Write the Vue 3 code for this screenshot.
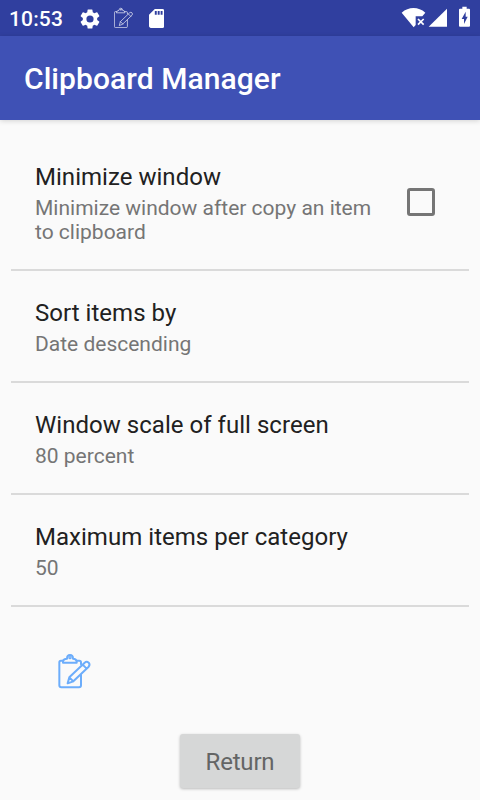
<script setup>
const settings = [
  { title: 'Minimize window', summary: 'Minimize window after copy an item to clipboard', checkbox: true },
  { title: 'Sort items by', summary: 'Date descending' },
  { title: 'Window scale of full screen', summary: '80 percent' },
  { title: 'Maximum items per category', summary: '50' }
]
</script>

<template>
  <div class="screen">
    <svg class="defs" width="0" height="0">
      <symbol id="clipboard" viewBox="51 37 108 114">
        <path d="M69 60H63Q58 60 58 65V134Q58 140 64 140H117Q123 140 123 134V103M110 60H118Q123 60 123 65V71" />
        <path d="M69 66H110V62Q109 54 99 54Q99 43 90 43Q81 43 81 54Q70 54 69 62Z" />
        <circle cx="90" cy="51" r="2" />
        <path d="M83 128L88 110L134 66Q140 61 146 66Q151 72 146 78L100 122ZM88 110L100 122M128 72L140 84" />
      </symbol>
    </svg>
    <header class="status">
      <span class="time">10:53</span>
      <svg class="gear" viewBox="0 0 24 24"><path fill="#fff" d="M19.14 12.94c.04-.3.06-.61.06-.94s-.02-.64-.07-.94l2.03-1.58a.49.49 0 0 0 .12-.61l-1.92-3.32a.49.49 0 0 0-.59-.22l-2.39.96c-.5-.38-1.03-.7-1.62-.94l-.36-2.54a.48.48 0 0 0-.48-.41h-3.84a.48.48 0 0 0-.47.41l-.36 2.54c-.59.24-1.13.57-1.62.94l-2.39-.96a.48.48 0 0 0-.59.22L2.74 8.87a.48.48 0 0 0 .12.61l2.03 1.58c-.05.3-.09.63-.09.94s.02.64.07.94l-2.03 1.58a.49.49 0 0 0-.12.61l1.92 3.32c.12.22.37.29.59.22l2.39-.96c.5.38 1.03.7 1.62.94l.36 2.54c.05.24.24.41.48.41h3.84c.24 0 .44-.17.47-.41l.36-2.54c.59-.24 1.13-.56 1.62-.94l2.39.96c.22.08.47 0 .59-.22l1.92-3.32a.48.48 0 0 0-.12-.61l-2.01-1.58zM12 15.6A3.6 3.6 0 1 1 12 8.4a3.6 3.6 0 0 1 0 7.2z" /></svg>
      <svg class="clip small"><use href="#clipboard" /></svg>
      <svg class="sd" viewBox="4 2 16 20" preserveAspectRatio="none"><path fill="#fff" d="M18 2h-8L4 8v12c0 1.1.9 2 2 2h12c1.1 0 2-.9 2-2V4c0-1.1-.9-2-2-2zm-6 6h-2V4h2v4zm3 0h-2V4h2v4zm3 0h-2V4h2v4z" /></svg>
      <svg class="indicators" viewBox="30 0 240 108">
        <path fill="#fff" d="M35 38Q51 24 70.500 24Q90 24 106 38L97 49H77V75L71 82Z" />
        <path fill="none" stroke="#fff" stroke-width="5" d="M84 57L101 74M101 57L84 74" />
        <path fill="#fff" d="M116 80L171 26V80Z" />
        <path fill="#fff" fill-rule="evenodd" d="M217 20H230V26H237Q240 26 240 29V77Q240 80 237 80H210Q207 80 207 77V29Q207 26 210 26H217ZM227 35L215 57H222V72L233 50H227Z" />
      </svg>
    </header>
    <div class="appbar"><h1>Clipboard Manager</h1></div>
    <main>
      <section v-for="item in settings" :key="item.title" class="row">
        <div class="text">
          <div class="title">{{ item.title }}</div>
          <div class="summary">{{ item.summary }}</div>
        </div>
        <span v-if="item.checkbox" class="box"></span>
      </section>
      <svg class="clip large"><use href="#clipboard" /></svg>
      <button class="return">Return</button>
    </main>
  </div>
</template>

<style>
body { background: #fafafa; }
</style>

<style scoped>
.screen {
  width: 480px;
  height: 800px;
  overflow: hidden;
  background: #fafafa;
  font-family: Roboto, sans-serif;
  display: flex;
  flex-direction: column;
}
.defs { display: block; flex: none; height: 0; }
.status {
  height: 36px;
  flex: none;
  display: flex;
  align-items: center;
  background: #303f9f;
  color: #fff;
}
.time {
  width: 69px;
  padding: 2px 0 0 9px;
  font-size: 21px;
  font-weight: 500;
  line-height: 34px;
  letter-spacing: .15px;
}
.gear { width: 24px; height: 24px; margin-top: 1px; }
.clip { fill: none; stroke-linejoin: round; stroke-linecap: round; }
.small { width: 21.600px; height: 22.800px; margin-left: 10.500px; margin-top: 1px; stroke: #fff; stroke-width: 3.800; opacity: .85; }
.sd { width: 15.500px; height: 19px; margin-left: 14.500px; }
.indicators { width: 80px; height: 36px; margin-left: auto; }
.appbar {
  height: 84px;
  flex: none;
  display: flex;
  align-items: center;
  padding: 0 24px;
  background: #3f51b5;
  box-shadow: 0 1px 5px rgba(0, 0, 0, .16);
}
h1 { margin: 0; padding-top: 2px; color: #fff; font-size: 30px; font-weight: 500; line-height: 36px; letter-spacing: .07px; }
main { padding: 15px 11px 0; display: flex; flex-direction: column; }
.row {
  box-sizing: border-box;
  min-height: 112px;
  padding: 28px 34px 25px 24px;
  border-bottom: 2px solid #dadada;
  display: flex;
  align-items: center;
  justify-content: space-between;
}
.text { max-width: 350px; }
.title { color: #212121; font-size: 24px; line-height: 28px; letter-spacing: .03px; }
.summary { margin-top: 5px; color: #757575; font-size: 21px; line-height: 24px; }
.box {
  box-sizing: border-box;
  width: 28px;
  height: 28px;
  margin-bottom: 4px;
  border: 3px solid #757575;
  border-radius: 3px;
}
.large { width: 36px; height: 38px; margin: 46px 0 0 46px; stroke: #6cadfb; stroke-width: 6; }
.return {
  align-self: center;
  width: 120px;
  height: 54px;
  margin-top: 43px;
  padding: 2px 0 0;
  border: 0;
  border-radius: 3px;
  background: #d6d7d7;
  color: #646565;
  font-family: inherit;
  font-size: 24px;
  letter-spacing: -.2px;
  box-shadow: 0 1px 3px rgba(0, 0, 0, .26);
}
</style>
